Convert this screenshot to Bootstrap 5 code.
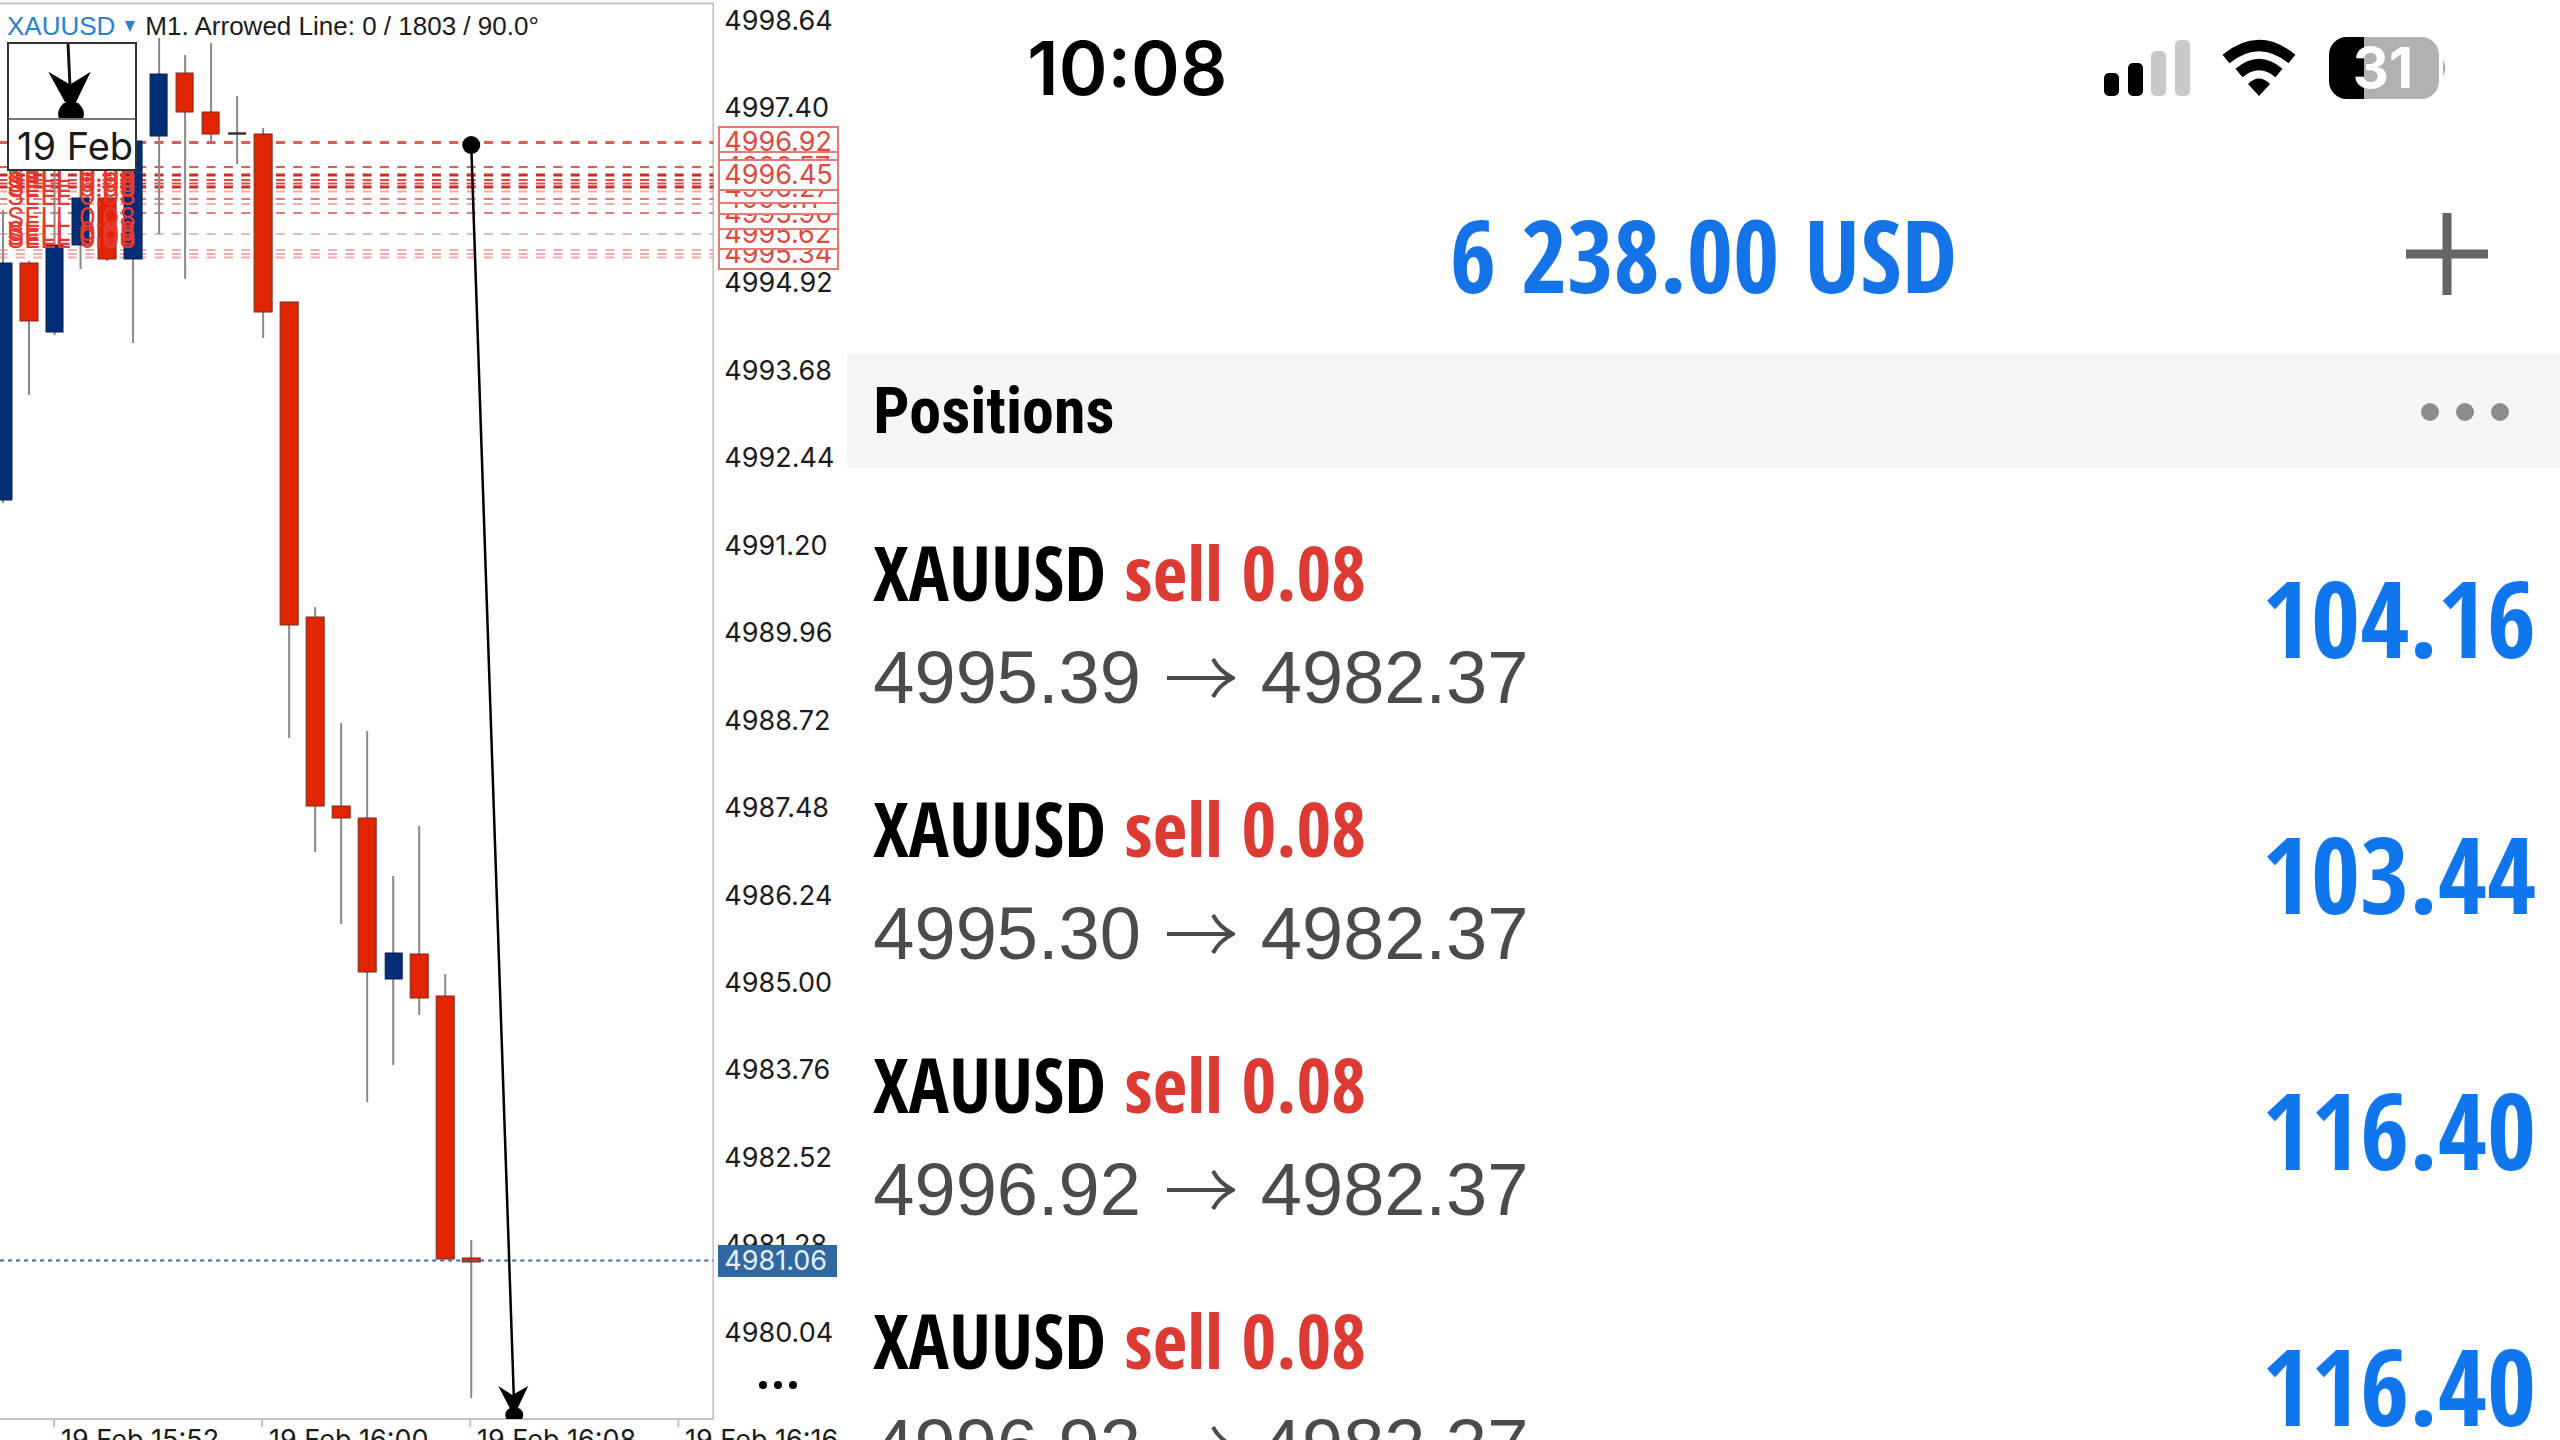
<!DOCTYPE html>
<html lang="en">
<head>
<meta charset="utf-8">
<meta name="viewport" content="width=device-width, initial-scale=1">
<title>XAUUSD positions</title>
<link href="https://cdn.jsdelivr.net/npm/bootstrap@5.3.0/dist/css/bootstrap.min.css" rel="stylesheet">
<style>
  body { background: #fefefe; color: #000; font-family: "Liberation Sans", sans-serif; }
  .screen { height: 100vh; }
  .condensed { font-family: "Open Sans Condensed", "Roboto Condensed", "Liberation Sans", sans-serif; font-weight: 700; }

  /* chart */
  .chart-pane { flex: 0 0 33.1%; font-family: Inter, sans-serif; font-size: 27px; line-height: 26px; color: #1c1c1c; }
  .plot > svg { display: block; width: 100%; height: 1440px; }
  .plot-title { top: 13px; left: 7px; gap: 10px; font-family: "Liberation Sans", sans-serif; font-size: 26px; line-height: 26px; }
  .symbol-btn { color: #2b80d2; font: inherit; display: flex; align-items: center; gap: 10px; }
  .price-axis { flex: 0 0 133px; }
  .ladder { padding: 8px 0 0 10px; height: 1346px; }
  .slot { height: 26px; }
  .order-tag { left: 4px; width: 121px; height: 32px; line-height: 28px; padding-left: 4px; border: 2px solid #e87a74; color: #dc4a42; background: #fff; }
  .last-tag { left: 4px; top: 1245px; width: 119px; height: 32px; line-height: 32px; padding-left: 6px; background: #31689f; color: #e4f2ff; }
  .axis-more { padding: 34px 0 0 44px; }
  .date-axis { top: 1427px; left: 61px; }
  .date-axis span { flex: 0 0 208px; }
  .lens { left: 7px; top: 42px; width: 130px; height: 129px; border: 2px solid #333; background: #fff; }
  .lens-date { height: 51px; border-top: 2px solid #777; font-size: 38px; line-height: 52px; padding-left: 8px; }

  /* account */
  .status-bar, .balance-row, .section-bar { flex-shrink: 0; }
  .status-bar { height: 136px; padding: 0 112px 0 180px; }
  .clock { font-family: Inter, sans-serif; font-weight: 600; font-size: 74px; line-height: 80px; }
  .balance-row { height: 218px; padding: 18px 72px 0; }
  .balance-side { flex: 1 1 0; }
  .balance { font-size: 100px; line-height: 110px; color: #1473e6; }
  .section-bar { height: 114px; padding: 2px 50px 0 26px; background: #f6f6f6; }
  .section-name { font-family: "Roboto Condensed", "Liberation Sans", sans-serif; font-weight: 700; font-size: 64px; line-height: 72px; }
  .deals { padding-top: 24px; }
  .deal { height: 256px; flex: 0 0 256px; padding: 23px 24px 13px 26px; }
  .deal-name { font-size: 75px; line-height: 106px; }
  .sell { color: #dc3b35; }
  .deal-price { font-size: 74px; line-height: 106px; color: #4b4b4d; gap: 26px; }
  .profit { font-size: 106px; line-height: 110px; padding-bottom: 16px; color: #0f76ee; }
</style>
</head>
<body>
<main class="screen d-flex overflow-hidden">

  <section class="chart-pane d-flex position-relative" aria-label="Price chart">
    <div class="plot position-relative flex-grow-1">
      <svg viewBox="0 0 714 1440" preserveAspectRatio="none" aria-hidden="true">
        <defs><clipPath id="area"><rect x="0" y="0" width="714" height="1419"/></clipPath></defs>
        <g stroke="#c4c4c4" stroke-width="2" fill="none">
          <path d="M0 3.5H713V1419H0M54 1419v8M262 1419v8M470 1419v8M678 1419v8M713 21h6M713 108h6M713 283h6M713 371h6M713 458h6M713 546h6M713 633h6M713 721h6M713 808h6M713 896h6M713 983h6M713 1071h6M713 1158h6M713 1246h6M713 1333h6"/>
        </g>
        <!-- open order levels -->
        <g stroke="#dd5e58" stroke-width="3" stroke-dasharray="9 8.33" stroke-dashoffset="1.5">
          <path d="M0 142.5H713"/><path d="M0 167H713" stroke-width="2"/>
          <path d="M0 175H713M0 187H713" stroke="#cf2a26"/>
          <path d="M0 180H713M0 183.500H713" stroke="#e8483f" stroke-width="2"/>
          <path d="M0 191.500H713M0 204H713" stroke="#f2aaa6" stroke-width="2"/>
          <path d="M0 199H713M0 213H713" stroke="#db7f7c" stroke-width="2"/>
          <path d="M0 234H713" stroke="#dda5a3" stroke-width="1.500"/>
          <path d="M0 250H713M0 254H713M0 257.500H713" stroke="#efaeaa" stroke-width="2"/>
        </g>
        <!-- wicks -->
        <path stroke="#8a8a8a" stroke-width="2" d="M3 210V503M29 261V395M54.500 170V335M80.500 170V269M107 190V261M133 141V343M159 38V234M185 55V279M211 43V143M237 96V164M263 128V338M289 302V738M315 607V852M341 723V924M367 731V1102M393 876V1065M419 826V1015M445 974V1259M471 1240V1398"/>
        <path stroke="#333" stroke-width="2.500" d="M228 133.500h18"/>
        <!-- rising bodies -->
        <g fill="#022d77" stroke="#0a2350" stroke-width="1">
          <rect x="-6" y="263" width="18" height="237"/><rect x="46" y="245" width="17" height="87"/><rect x="72" y="198" width="17" height="47"/><rect x="124" y="141" width="18" height="118"/><rect x="150" y="74" width="17" height="62"/><rect x="385" y="953" width="17" height="26"/>
        </g>
        <!-- falling bodies -->
        <g fill="#e12503" stroke="#7d2a1c" stroke-width="1">
          <rect x="20" y="263" width="18" height="58"/><rect x="98" y="198" width="18" height="61"/><rect x="176" y="73" width="17" height="39"/><rect x="202" y="112" width="17" height="22"/><rect x="254" y="134" width="18" height="178"/><rect x="280" y="302" width="18" height="323"/><rect x="306" y="617" width="18" height="189"/><rect x="332" y="806" width="18" height="12"/><rect x="358" y="818" width="18" height="154"/><rect x="410" y="954" width="18" height="44"/><rect x="436" y="996" width="18" height="263"/><rect x="462" y="1258" width="18" height="4"/>
        </g>
        <path d="M0 1260.500H713" stroke="#3f6a94" stroke-width="2" stroke-dasharray="4 4"/>
        <!-- order captions -->
        <g fill="#e8382f" font-family="Inter, sans-serif" font-size="27">
          <text x="7" y="182">SELL 0.08</text><text x="7" y="187">SELL 0.08</text><text x="7" y="192">SELL 0.08</text><text x="7" y="197">SELL 0.08</text><text x="7" y="205">SELL 0.08</text><text x="7" y="227">SELL 0.08</text><text x="7" y="241">SELL 0.08</text><text x="7" y="245">SELL 0.08</text><text x="7" y="248">SELL 0.08</text>
        </g>
        <!-- arrowed line -->
        <g clip-path="url(#area)">
          <path d="M471 145L514 1410" stroke="#000" stroke-width="2.500"/>
          <circle cx="471" cy="145" r="9"/><ellipse cx="514" cy="1415" rx="9" ry="8"/>
          <path d="M498 1386L512 1395L528 1386L517 1409H510Z"/>
        </g>
      </svg>
      <div class="plot-title position-absolute d-flex text-nowrap">
        <button type="button" class="symbol-btn btn p-0 border-0">XAUUSD<svg width="10" height="12" viewBox="0 0 10 12" aria-hidden="true"><path d="M0 1H10L5 12Z" fill="#2b80d2"/></svg></button>
        <span>M1. Arrowed Line: 0 / 1803 / 90.0°</span>
      </div>
      <div class="lens position-absolute d-flex flex-column overflow-hidden">
        <svg width="125" height="75" viewBox="0 0 125 75" aria-hidden="true"><path d="M59 0L61 44" stroke="#111" stroke-width="3"/><path d="M39 28L61 41L82 28L67 59H56Z"/><ellipse cx="62" cy="71" rx="13" ry="13"/></svg>
        <div class="lens-date text-nowrap">19 Feb</div>
      </div>
    </div>

    <div class="price-axis position-relative">
      <div class="ladder d-flex flex-column justify-content-between">
        <span>4998.64</span><span>4997.40</span><span class="slot"></span><span>4994.92</span><span>4993.68</span><span>4992.44</span><span>4991.20</span><span>4989.96</span><span>4988.72</span><span>4987.48</span><span>4986.24</span><span>4985.00</span><span>4983.76</span><span>4982.52</span><span>4981.28</span><span>4980.04</span>
      </div>
      <button type="button" class="axis-more btn border-0 d-block" aria-label="More chart options">
        <svg class="d-block" width="42" height="10" viewBox="0 0 42 10"><circle cx="5" cy="5" r="4"/><circle cx="20" cy="5" r="4"/><circle cx="35" cy="5" r="4"/></svg>
      </button>
      <div class="order-tag position-absolute" style="top:238px">4995.34</div>
      <div class="order-tag position-absolute" style="top:218px">4995.62</div>
      <div class="order-tag position-absolute" style="top:198px">4995.90</div>
      <div class="order-tag position-absolute" style="top:183px">4996.11</div>
      <div class="order-tag position-absolute" style="top:172px">4996.27</div>
      <div class="order-tag position-absolute" style="top:126px">4996.92</div>
      <div class="order-tag position-absolute" style="top:151px">4996.57</div>
      <div class="order-tag position-absolute" style="top:159px">4996.45</div>
      <div class="last-tag position-absolute">4981.06</div>
    </div>
    <div class="date-axis position-absolute d-flex text-nowrap"><span>19 Feb 15:52</span><span>19 Feb 16:00</span><span>19 Feb 16:08</span><span>19 Feb 16:16</span></div>
  </section>

  <section class="flex-grow-1 d-flex flex-column" aria-label="Account">
    <div class="status-bar d-flex align-items-center justify-content-between">
      <span class="clock">10:08</span>
      <svg width="346" height="64" viewBox="0 0 346 64" role="img" aria-label="Signal, Wi-Fi and battery at 31 percent">
        <rect x="2" y="37" width="15" height="23" rx="5"/><rect x="26" y="27" width="15" height="33" rx="5"/>
        <g fill="#c9c9c9"><rect x="49" y="15" width="15" height="45" rx="5"/><rect x="73" y="4" width="15" height="56" rx="5"/></g>
        <g fill="none" stroke="#000" stroke-width="11"><path d="M124 23Q157 -4 190 23"/><path d="M137 37Q157 20 177 37"/></g>
        <path d="M157 60L146 48Q157 37 168 48Z"/>
        <clipPath id="cell"><rect x="227" y="1" width="110" height="62" rx="18"/></clipPath>
        <g clip-path="url(#cell)"><rect x="227" y="1" width="110" height="62" fill="#b1b1b1"/><rect x="227" y="1" width="35" height="62"/></g>
        <path d="M341 24q5 8 0 16Z" fill="#b1b1b1"/>
        <text x="281" y="52" text-anchor="middle" font-family="Inter, sans-serif" font-weight="700" font-size="56" fill="#fff">31</text>
      </svg>
    </div>
    <div class="balance-row d-flex align-items-center">
      <span class="balance-side"></span>
      <span class="balance condensed text-nowrap">6 238.00 USD</span>
      <span class="balance-side d-flex justify-content-end">
        <button type="button" class="btn p-0 border-0" aria-label="New order"><svg class="d-block" width="82" height="82" viewBox="0 0 82 82"><path d="M41 0V82M0 41H82" stroke="#666" stroke-width="9"/></svg></button>
      </span>
    </div>
    <div class="section-bar d-flex align-items-center justify-content-between">
      <h1 class="section-name m-0">Positions</h1>
      <button type="button" class="btn p-0 border-0" aria-label="Position options"><svg class="d-block" width="90" height="20" viewBox="0 0 90 20" fill="#8d8d8d"><circle cx="10" cy="10" r="9"/><circle cx="45" cy="10" r="9"/><circle cx="80" cy="10" r="9"/></svg></button>
    </div>
    <ul class="deals list-unstyled m-0 d-flex flex-column text-nowrap">
      <li class="deal d-flex align-items-center justify-content-between">
        <div><div class="deal-name condensed">XAUUSD <span class="sell">sell 0.08</span></div><div class="deal-price d-flex align-items-center">4995.39<svg width="68" height="50" viewBox="0 0 68 50" aria-label="to"><path d="M0 25H64M46 6Q52 18 66 25Q52 32 46 44" fill="none" stroke="#4b4b4d" stroke-width="4"/></svg>4982.37</div></div>
        <span class="profit condensed">104.16</span>
      </li>
      <li class="deal d-flex align-items-center justify-content-between">
        <div><div class="deal-name condensed">XAUUSD <span class="sell">sell 0.08</span></div><div class="deal-price d-flex align-items-center">4995.30<svg width="68" height="50" viewBox="0 0 68 50" aria-label="to"><path d="M0 25H64M46 6Q52 18 66 25Q52 32 46 44" fill="none" stroke="#4b4b4d" stroke-width="4"/></svg>4982.37</div></div>
        <span class="profit condensed">103.44</span>
      </li>
      <li class="deal d-flex align-items-center justify-content-between">
        <div><div class="deal-name condensed">XAUUSD <span class="sell">sell 0.08</span></div><div class="deal-price d-flex align-items-center">4996.92<svg width="68" height="50" viewBox="0 0 68 50" aria-label="to"><path d="M0 25H64M46 6Q52 18 66 25Q52 32 46 44" fill="none" stroke="#4b4b4d" stroke-width="4"/></svg>4982.37</div></div>
        <span class="profit condensed">116.40</span>
      </li>
      <li class="deal d-flex align-items-center justify-content-between">
        <div><div class="deal-name condensed">XAUUSD <span class="sell">sell 0.08</span></div><div class="deal-price d-flex align-items-center">4996.92<svg width="68" height="50" viewBox="0 0 68 50" aria-label="to"><path d="M0 25H64M46 6Q52 18 66 25Q52 32 46 44" fill="none" stroke="#4b4b4d" stroke-width="4"/></svg>4982.37</div></div>
        <span class="profit condensed">116.40</span>
      </li>
    </ul>
  </section>
</main>
<script src="https://cdn.jsdelivr.net/npm/bootstrap@5.3.0/dist/js/bootstrap.bundle.min.js"></script>
</body>
</html>
